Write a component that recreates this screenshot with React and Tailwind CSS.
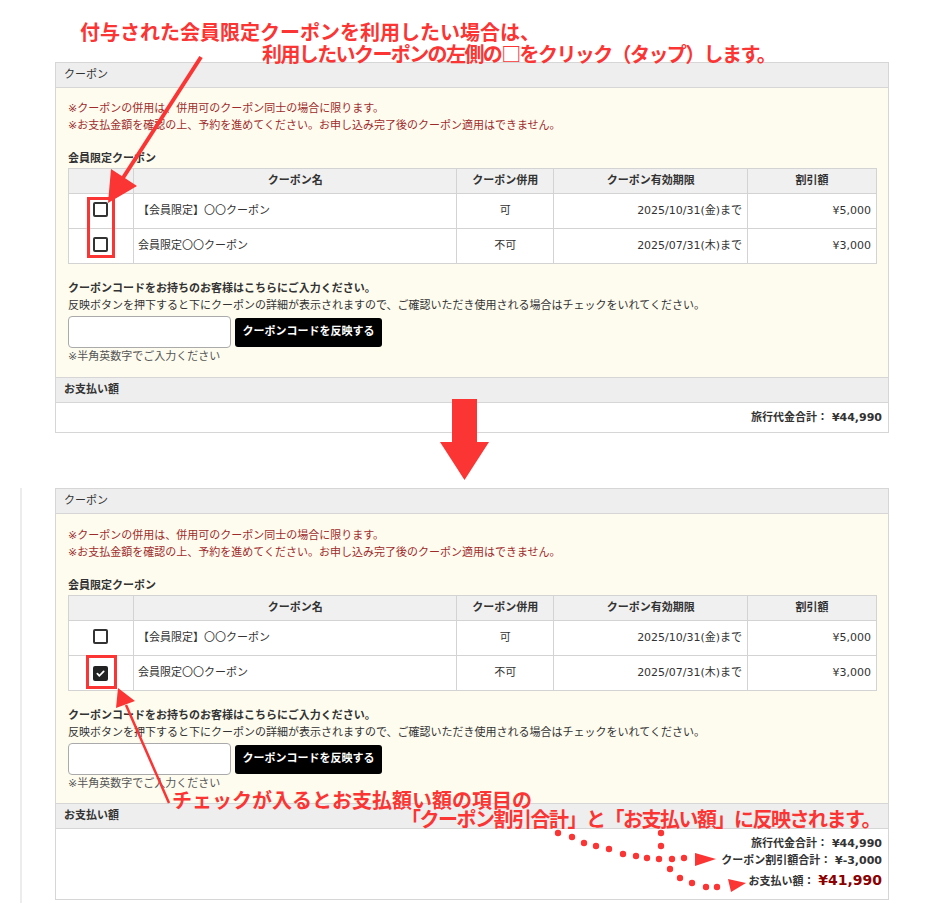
const ROWS = [
  { name: '【会員限定】〇〇クーポン', combo: '可', limit: '2025/10/31(金)まで', amount: '¥5,000' },
  { name: '会員限定〇〇クーポン', combo: '不可', limit: '2025/07/31(木)まで', amount: '¥3,000' },
];

const UI_FONT = { fontFamily: '"DejaVu Sans", "Noto Sans CJK JP", sans-serif' };
const RED_FONT = { fontFamily: '"Noto Sans CJK JP", sans-serif' };

function Checkbox({ checked }) {
  if (checked) {
    return (
      <span className="inline-flex w-[15px] h-[15px] rounded-[2px] bg-[#222] items-center justify-center">
        <svg className="w-[9px] h-[9px]" viewBox="0 0 10 10" fill="none">
          <path d="M1.5 5.2l2.3 2.3L8.5 2.6" stroke="#fff" strokeWidth="2" strokeLinecap="round" strokeLinejoin="round" />
        </svg>
      </span>
    );
  }
  return <span className="inline-block w-[15px] h-[15px] rounded-[2px] border-2 border-[#333] bg-white" />;
}

function CouponPanel({ checkedIndex, totals, tight }) {
  return (
    <div className="w-[834px] border border-[#d6d6d6] text-[#333]" style={UI_FONT}>
      {/* Header */}
      <div className="h-[25px] bg-[#eeeeee] border-b border-[#d6d6d6] pl-[8px] flex items-center text-[11px]">クーポン</div>

      {/* Body */}
      <div className={`bg-[#fefcef] px-[12px] ${tight ? 'pt-[13px] pb-[11px]' : 'pt-[12px] pb-[12px]'}`}>
        <div className="text-[11px] leading-[17px] text-[#9e2b2b]">
          <p>※クーポンの併用は、併用可のクーポン同士の場合に限ります。</p>
          <p>※お支払金額を確認の上、予約を進めてください。お申し込み完了後のクーポン適用はできません。</p>
        </div>

        <p className="mt-[16px] text-[11px] leading-[17px] font-bold">会員限定クーポン</p>
        <table className="mt-[1px] w-[809px] border-collapse text-[11px] bg-white">
          <thead>
            <tr className="bg-[#f0f0f0]">
              <th className="h-[25px] w-[65px] border border-[#d3d3d3]"></th>
              <th className="w-[324px] border border-[#d3d3d3] font-bold">クーポン名</th>
              <th className="w-[97px] border border-[#d3d3d3] font-bold">クーポン併用</th>
              <th className="w-[194px] border border-[#d3d3d3] font-bold">クーポン有効期限</th>
              <th className="w-[129px] border border-[#d3d3d3] font-bold">割引額</th>
            </tr>
          </thead>
          <tbody>
            {ROWS.map((r, i) => (
              <tr key={i}>
                <td className="h-[35px] border border-[#d3d3d3] text-center align-middle">
                  <span className="inline-flex pt-[3px]"><Checkbox checked={checkedIndex === i} /></span>
                </td>
                <td className="border border-[#d3d3d3] pl-[4px]">{r.name}</td>
                <td className="border border-[#d3d3d3] text-center">{r.combo}</td>
                <td className="border border-[#d3d3d3] text-right pr-[5px]">{r.limit}</td>
                <td className="border border-[#d3d3d3] text-right pr-[5px]">{r.amount}</td>
              </tr>
            ))}
          </tbody>
        </table>

        <div className="mt-[16px] text-[11px] leading-[17px]">
          <p className="font-bold">クーポンコードをお持ちのお客様はこちらにご入力ください。</p>
          <p>反映ボタンを押下すると下にクーポンの詳細が表示されますので、ご確認いただき使用される場合はチェックをいれてください。</p>
        </div>
        <div className="mt-[2px] flex items-start gap-[4px]">
          <div className="w-[163px] h-[32px] bg-white border border-[#aaaaaa] rounded-[4px]" />
          <button className="mt-[2px] w-[147px] h-[29px] bg-black text-white rounded-[3px] text-[11px] font-bold">クーポンコードを反映する</button>
        </div>
        <p className="text-[11px] leading-[17px] text-[#555]">※半角英数字でご入力ください</p>
      </div>

      {/* Payment */}
      <div className="h-[26px] bg-[#eeeeee] border-y border-[#d6d6d6] pl-[8px] flex items-center text-[11px] font-bold">お支払い額</div>
      <div className="bg-white py-[6px] pr-[6px] flex flex-col items-end">
        {totals.map((t, i) => (
          <p key={i} className={`${t.big ? 'leading-[22px]' : 'leading-[17px]'} text-[11px] font-bold`}>
            {t.label}：{' '}
            <span className={t.big ? 'text-[14px] text-[#8b0000]' : ''}>{t.value}</span>
          </p>
        ))}
      </div>
    </div>
  );
}

export default function App() {
  const dotsA = [[558,833],[572,837],[584,843],[596,846],[609,849],[623,854],[636,856],[647,858],[659,859],[672,859],[684,858]];
  const dotsB = [[661,833],[661,846],[670,869],[680,878],[692,883],[706,887],[717,887]];

  return (
    <div className="relative w-[944px] h-[923px] bg-white overflow-hidden">
      <div className="pt-[62px] pl-[55px]">
        <CouponPanel checkedIndex={-1} totals={[{ label: '旅行代金合計', value: '¥44,990' }]} />
      </div>

      <div className="mt-[55px] ml-[20px] w-[869px] border-l-2 border-[#ececec] pl-[33px] pb-[3px]">
        <CouponPanel
          tight
          checkedIndex={1}
          totals={[
            { label: '旅行代金合計', value: '¥44,990' },
            { label: 'クーポン割引額合計', value: '¥-3,000' },
            { label: 'お支払い額', value: '¥41,990', big: true },
          ]}
        />
      </div>

      {/* Annotations */}
      <p className="absolute left-[80px] top-[19px] text-[20px] leading-[26px] font-bold text-[#fb3434] whitespace-nowrap" style={RED_FONT}>
        付与された会員限定クーポンを利用したい場合は、
      </p>
      <p className="absolute left-[262px] top-[42px] text-[20px] leading-[24px] font-bold text-[#fb3434] whitespace-nowrap tracking-[-1.6px]" style={RED_FONT}>
        利用したいクーポンの左側の□をクリック（タップ）します。
      </p>
      <p className="absolute left-[172px] top-[787px] text-[20px] leading-[26px] font-bold text-[#fb3434] whitespace-nowrap" style={RED_FONT}>
        チェックが入るとお支払額い額の項目の
      </p>
      <p className="absolute right-[64px] top-[807px] text-[20px] leading-[24px] font-bold text-[#fb3434] whitespace-nowrap tracking-[-1.5px]" style={RED_FONT}>
        「クーポン割引合計」と「お支払い額」に反映されます。
      </p>

      <div className="absolute left-[87px] top-[197px] w-[28px] h-[61px] border-[3px] border-[#fb3434]" />
      <div className="absolute left-[86px] top-[655px] w-[31px] h-[34px] border-[3px] border-[#fb3434]" />

      <svg className="absolute left-0 top-0 pointer-events-none" width="944" height="923" viewBox="0 0 944 923">
        {/* arrow to checkboxes */}
        <line x1="201" y1="57" x2="121" y2="181" stroke="#fb3434" strokeWidth="4" />
        <polygon points="108,203 111,169 137,186" fill="#fb3434" />
        {/* big down arrow */}
        <rect x="452" y="399" width="25" height="44" fill="#fb3434" />
        <polygon points="440,442 489,442 464.5,480" fill="#fb3434" />
        {/* arrow to checked box */}
        <line x1="169" y1="803" x2="126" y2="705" stroke="#fb3434" strokeWidth="2.5" />
        <polygon points="118,688 116,708 135,701" fill="#fb3434" />
        {/* dotted lines */}
        {dotsA.map(([x, y], i) => <circle key={'a' + i} cx={x} cy={y} r="3.2" fill="#fb3434" />)}
        {dotsB.map(([x, y], i) => <circle key={'b' + i} cx={x} cy={y} r="3.2" fill="#fb3434" />)}
        <polygon points="695,853 695,866 716,859" fill="#fb3434" />
        <polygon points="728,879 731,892 746,883" fill="#fb3434" />
      </svg>
    </div>
  );
}
